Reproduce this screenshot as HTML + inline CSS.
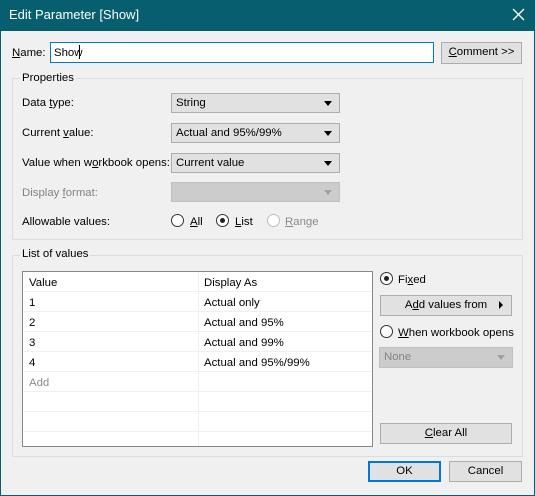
<!DOCTYPE html>
<html><head><style>
*{box-sizing:border-box;margin:0;padding:0}
body{width:535px;height:496px;background:#075e6e;font-family:"Liberation Sans",sans-serif;font-size:11.4px;color:#000;position:relative;overflow:hidden}
.a{position:absolute}
#win{position:absolute;left:1px;top:31px;width:533px;height:464px;background:#f0f0f0}
.t{position:absolute;white-space:nowrap;line-height:14px}
.btn{position:absolute;background:#e1e1e1;border:1px solid #adadad;text-align:center;line-height:19px}
.cb{position:absolute;background:#e1e1e1;border:1px solid #adadad;padding-left:4px;line-height:18px}
.cb:after{content:"";position:absolute;right:7px;top:7px;border-left:4px solid transparent;border-right:4px solid transparent;border-top:5px solid #000}
.cb.dis{background:#cccccc;border-color:#bfbfbf;color:#838383}
.cb.dis:after{border-top-color:#a0a0a0}
.grp{position:absolute;border:1px solid #dcdcdc}
.gl{position:absolute;background:#f0f0f0;padding:0 2px;line-height:14px}
.rd{position:absolute;width:13px;height:13px;border:1px solid #333;border-radius:50%;background:#fff}
.rd.on:after{content:"";position:absolute;left:3px;top:3px;width:5px;height:5px;border-radius:50%;background:#222}
.rd.dis{border-color:#bcbcbc}
u{text-decoration:underline}
.row{position:absolute;left:0;width:349px;height:20px;border-bottom:1px solid #f0f0f0}
</style></head><body>
<div class="t" style="left:9px;top:8px;color:#fff;font-size:13px">Edit Parameter [Show]</div>
<svg class="a" style="left:512px;top:8px" width="13" height="13"><path d="M1 1L12 12M12 1L1 12" stroke="#fff" stroke-width="1.3"/></svg>
<div id="win"></div>
<div class="t" style="left:12px;top:46px"><u>N</u>ame:</div>
<div class="a" style="left:50px;top:42px;width:384px;height:21px;background:#fff;border:1px solid #0078d7"></div>
<div class="t" style="left:54px;top:46px">Show</div>
<div class="a" style="left:79px;top:45px;width:1px;height:14px;background:#000"></div>
<div class="btn" style="left:441px;top:42px;width:81px;height:22px"><u>C</u>omment &gt;&gt;</div>

<div class="grp" style="left:12px;top:78px;width:511px;height:162px"></div>
<div class="gl" style="left:20px;top:71px">Properties</div>
<div class="t" style="left:22px;top:96px">Data <u>t</u>ype:</div>
<div class="cb" style="left:171px;top:93px;width:169px;height:20px">String</div>
<div class="t" style="left:22px;top:126px">Current <u>v</u>alue:</div>
<div class="cb" style="left:171px;top:123px;width:169px;height:20px">Actual and 95%/99%</div>
<div class="t" style="left:22px;top:156px">Value when w<u>o</u>rkbook opens:</div>
<div class="cb" style="left:171px;top:153px;width:169px;height:20px">Current value</div>
<div class="t" style="left:22px;top:186px;color:#838383">Display <u>f</u>ormat:</div>
<div class="cb dis" style="left:171px;top:182px;width:169px;height:20px"></div>
<div class="t" style="left:22px;top:215px">Allowable values:</div>
<div class="rd" style="left:171px;top:214px"></div><div class="t" style="left:190px;top:215px"><u>A</u>ll</div>
<div class="rd on" style="left:216px;top:214px"></div><div class="t" style="left:235px;top:215px"><u>L</u>ist</div>
<div class="rd dis" style="left:267px;top:214px"></div><div class="t" style="left:285px;top:215px;color:#8a8a8a"><u>R</u>ange</div>

<div class="grp" style="left:12px;top:255px;width:511px;height:202px"></div>
<div class="gl" style="left:20px;top:247px">List of values</div>
<div class="a" style="left:22px;top:271px;width:351px;height:176px;background:#fff;border:1px solid #828790;overflow:hidden">
<div class="a" style="left:175px;top:0;width:1px;height:176px;background:#f0f0f0"></div>
<div class="row" style="top:0"><span class="t" style="left:6px;top:4px">Value</span><span class="t" style="left:181px;top:4px">Display As</span></div>
<div class="row" style="top:20px"><span class="t" style="left:6px;top:4px">1</span><span class="t" style="left:181px;top:4px">Actual only</span></div>
<div class="row" style="top:40px"><span class="t" style="left:6px;top:4px">2</span><span class="t" style="left:181px;top:4px">Actual and 95%</span></div>
<div class="row" style="top:60px"><span class="t" style="left:6px;top:4px">3</span><span class="t" style="left:181px;top:4px">Actual and 99%</span></div>
<div class="row" style="top:80px"><span class="t" style="left:6px;top:4px">4</span><span class="t" style="left:181px;top:4px">Actual and 95%/99%</span></div>
<div class="row" style="top:100px"><span class="t" style="left:6px;top:4px;color:#8a8a8a">Add</span></div>
<div class="row" style="top:120px"></div>
<div class="row" style="top:140px"></div>
</div>
<div class="rd on" style="left:380px;top:272px"></div><div class="t" style="left:398px;top:273px">Fi<u>x</u>ed</div>
<div class="btn" style="left:380px;top:295px;width:132px;height:21px">A<u>d</u>d values from</div>
<svg class="a" style="left:499px;top:301px" width="5" height="8"><path d="M0 0L4 4L0 8Z" fill="#000"/></svg>
<div class="rd" style="left:380px;top:325px"></div><div class="t" style="left:398px;top:326px"><u>W</u>hen workbook opens</div>
<div class="cb dis" style="left:379px;top:347px;width:134px;height:21px">None</div>
<div class="btn" style="left:380px;top:423px;width:132px;height:21px"><u>C</u>lear All</div>
<div class="btn" style="left:368px;top:461px;width:73px;height:21px;border:2px solid #0078d7;line-height:17px">OK</div>
<div class="btn" style="left:449px;top:461px;width:73px;height:21px">Cancel</div>
</body></html>
